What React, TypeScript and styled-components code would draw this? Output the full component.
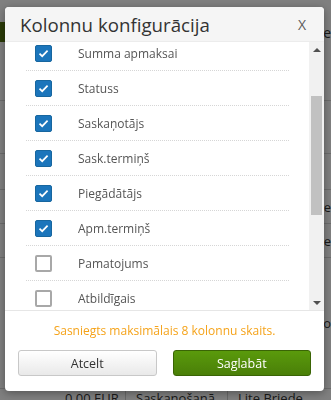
import React, { useEffect, useRef, useState } from "react";
import styled, { createGlobalStyle } from "styled-components";

const GlobalStyle = createGlobalStyle`
  html, body {
    margin: 0;
    padding: 0;
    background: #ffffff;
    font-family: "Open Sans", "Liberation Sans", sans-serif;
  }
`;

// page behind the dialog
const Page = styled.div`
  width: 331px;
  height: 400px;
  overflow: hidden;
  padding-top: 22px;
  box-sizing: border-box;
`;

const Toolbar = styled.div`
  display: flex;
  align-items: center;
  justify-content: space-between;
  height: 20px;
  color: #333;
  font-size: 14px;
`;

const GreenTab = styled.div`
  width: 90px;
  height: 20px;
  background: #55760f;
`;

const TableRow = styled.div<{ $h: number }>`
  display: flex;
  align-items: center;
  justify-content: flex-end;
  height: ${(p) => p.$h}px;
  border-bottom: 1px solid #d8d8d8;
  color: #333;
  font-size: 13px;
  white-space: nowrap;
`;

const BottomRow = styled.div`
  display: grid;
  grid-template-columns: 55px 70px 102px 1fr;
  height: 30px;
  font-size: 13px;
  color: #333;
  white-space: nowrap;
`;

const Cell = styled.div<{ $line?: boolean }>`
  padding-left: 10px;
  border-left: ${(p) => (p.$line ? "1px solid #cfcfcf" : "none")};
`;

const Backdrop = styled.div`
  position: fixed;
  inset: 0;
  background: rgba(0, 0, 0, 0.5);
`;

const Dialog = styled.div`
  position: fixed;
  left: 5px;
  top: 7px;
  width: 319px;
  height: 384px;
  background: #fff;
  border-radius: 4px;
  box-shadow: 0 2px 8px rgba(0, 0, 0, 0.35);
  display: flex;
  flex-direction: column;
  overflow: hidden;
`;

const Header = styled.div`
  height: 35px;
  flex: none;
  display: flex;
  align-items: center;
  justify-content: space-between;
  padding: 0 18px 0 15px;
  background: #f5f5f5;
  border-bottom: 1px solid #ececec;
  box-sizing: border-box;
`;

const Title = styled.h3`
  margin: 0;
  font-size: 18.7px;
  font-weight: 400;
  color: #333;
`;

const Close = styled.button`
  border: none;
  background: none;
  padding: 0;
  font-family: inherit;
  font-size: 14px;
  color: #5a5a5a;
  cursor: pointer;
`;

const Body = styled.div`
  flex: 1;
  min-height: 0;
  display: flex;
`;

const List = styled.div`
  flex: 1;
  overflow-y: scroll;
  scrollbar-width: none;
  padding: 12px 20px 0 21px;
  &::-webkit-scrollbar {
    display: none;
  }
`;

const Rail = styled.div`
  width: 15px;
  flex: none;
  background: #f1f1f1;
  display: flex;
  flex-direction: column;
`;

const Arrow = styled.div<{ $down?: boolean }>`
  height: 15px;
  flex: none;
  display: flex;
  align-items: center;
  justify-content: center;
  &::before {
    content: "";
    border-left: 4px solid transparent;
    border-right: 4px solid transparent;
    ${(p) =>
      p.$down ? "border-top: 4px solid #505050;" : "border-bottom: 4px solid #505050;"}
  }
`;

const Track = styled.div`
  flex: 1;
  display: flex;
  flex-direction: column;
  padding: 0 2px;
`;

const Thumb = styled.div`
  background: #c1c1c1;
  flex: none;
`;

const Row = styled.label`
  display: flex;
  align-items: center;
  height: 35px;
  box-sizing: border-box;
  padding-left: 9px;
  border-bottom: 1px dotted #d6d6d6;
  font-size: 12px;
  color: #555;
  cursor: pointer;
  &:last-child {
    border-bottom: none;
  }
`;

const Box = styled.span<{ $on: boolean }>`
  width: 17px;
  height: 17px;
  flex: none;
  box-sizing: border-box;
  border-radius: 2px;
  margin-right: 26px;
  display: flex;
  align-items: center;
  justify-content: center;
  background: ${(p) => (p.$on ? "#1b75bb" : "#fff")};
  border: ${(p) => (p.$on ? "1px solid #17669f" : "2px solid #a8a8a8")};
`;

const Footer = styled.div`
  flex: none;
  border-top: 1px solid #e6e6e6;
  padding: 11px 13px 15px;
  display: flex;
  flex-direction: column;
  gap: 11px;
`;

const Warning = styled.div`
  text-align: center;
  font-size: 12px;
  color: #f5a31a;
  line-height: 17px;
`;

const Buttons = styled.div`
  display: grid;
  grid-template-columns: 1fr 1fr;
  gap: 16px;
`;

const Button = styled.button<{ $primary?: boolean }>`
  height: 26px;
  border-radius: 3px;
  font-family: inherit;
  font-size: 12.5px;
  cursor: pointer;
  color: ${(p) => (p.$primary ? "#fff" : "#333")};
  border: 1px solid ${(p) => (p.$primary ? "#3a6405" : "#c8c8c8")};
  background: ${(p) =>
    p.$primary
      ? "linear-gradient(#5a9a0c, #4a7f08)"
      : "linear-gradient(#ffffff, #e9e9e9)"};
`;

const columns = [
  { name: "Dokumenta Nr.", on: true },
  { name: "Datums", on: true },
  { name: "Summa apmaksai", on: true },
  { name: "Statuss", on: true },
  { name: "Saskaņotājs", on: true },
  { name: "Sask.termiņš", on: true },
  { name: "Piegādātājs", on: true },
  { name: "Apm.termiņš", on: true },
  { name: "Pamatojums", on: false },
  { name: "Atbildīgais", on: false },
  { name: "Projekts", on: false },
  { name: "Valūta", on: false },
  { name: "Komentārs", on: false },
  { name: "Izveidoja", on: false },
  { name: "Izveides datums", on: false },
];

function Check() {
  return (
    <svg width="11" height="9" viewBox="0 0 11 9">
      <path d="M1.5 4.6 L4.2 7.2 L9.6 1.6" fill="none" stroke="#fff" strokeWidth="1.7" />
    </svg>
  );
}

export default function App() {
  const [items, setItems] = useState(columns);
  const [bar, setBar] = useState({ top: 0, size: 1 });
  const listRef = useRef<HTMLDivElement>(null);

  const measure = () => {
    const el = listRef.current;
    if (!el) return;
    setBar({ top: el.scrollTop / el.scrollHeight, size: el.clientHeight / el.scrollHeight });
  };

  useEffect(() => {
    if (listRef.current) listRef.current.scrollTop = 88;
    measure();
  }, []);

  const toggle = (i: number) => {
    setItems(items.map((c, k) => (k === i ? { ...c, on: !c.on } : c)));
  };

  return (
    <>
      <GlobalStyle />
      <Page>
        <Toolbar>
          <GreenTab />
          <span>Izvēle</span>
        </Toolbar>
        <TableRow $h={58} />
        <TableRow $h={52} />
        <TableRow $h={35} />
        <TableRow $h={33}>Apstiprināt;re</TableRow>
        <TableRow $h={33}>Apstiprināt;re</TableRow>
        <TableRow $h={130}>Nopo</TableRow>
        <BottomRow>
          <Cell />
          <Cell>0.00 EUR</Cell>
          <Cell $line>Saskaņošanā</Cell>
          <Cell $line>Lite Briede</Cell>
        </BottomRow>
      </Page>
      <Backdrop />
      <Dialog>
        <Header>
          <Title>Kolonnu konfigurācija</Title>
          <Close>X</Close>
        </Header>
        <Body>
          <List ref={listRef} onScroll={measure}>
            {items.map((c, i) => (
              <Row key={c.name} onClick={() => toggle(i)}>
                <Box $on={c.on}>{c.on && <Check />}</Box>
                {c.name}
              </Row>
            ))}
          </List>
          <Rail>
            <Arrow />
            <Track>
              <div style={{ height: `${bar.top * 100}%`, flex: "none" }} />
              <Thumb style={{ height: `${bar.size * 100}%` }} />
            </Track>
            <Arrow $down />
          </Rail>
        </Body>
        <Footer>
          <Warning>Sasniegts maksimālais 8 kolonnu skaits.</Warning>
          <Buttons>
            <Button>Atcelt</Button>
            <Button $primary>Saglabāt</Button>
          </Buttons>
        </Footer>
      </Dialog>
    </>
  );
}
